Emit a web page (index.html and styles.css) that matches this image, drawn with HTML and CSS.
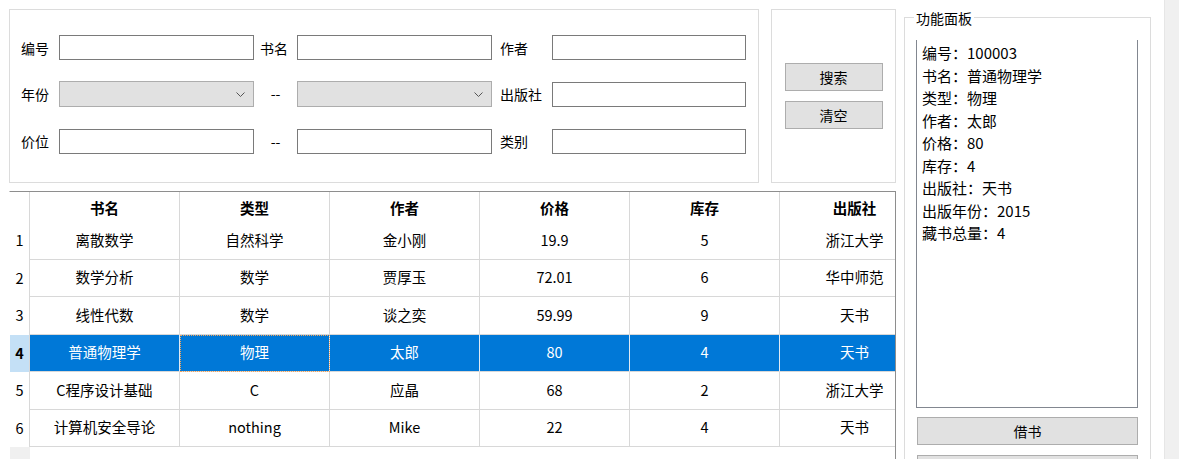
FILE: index.html
```html
<!DOCTYPE html>
<html lang="zh-CN">
<head>
<meta charset="utf-8">
<title>图书管理</title>
<link rel="stylesheet" href="styles.css">
</head>
<body>
<div class="window">
  <div class="main">
    <div class="top">
      <div class="search-box">
        <div class="form">
          <span class="lbl">编号</span>
          <input class="field" type="text">
          <span class="lbl l2">书名</span>
          <input class="field" type="text">
          <span class="lbl l3">作者</span>
          <input class="field" type="text">

          <span class="lbl">年份</span>
          <div class="combo"><svg class="chev" width="9" height="5" viewBox="0 0 9 5"><polyline points="0.5,0.5 4.5,4.5 8.5,0.5"/></svg></div>
          <span class="lbl dash">--</span>
          <div class="combo"><svg class="chev" width="9" height="5" viewBox="0 0 9 5"><polyline points="0.5,0.5 4.5,4.5 8.5,0.5"/></svg></div>
          <span class="lbl l3">出版社</span>
          <input class="field" type="text">

          <span class="lbl">价位</span>
          <input class="field" type="text">
          <span class="lbl dash">--</span>
          <input class="field" type="text">
          <span class="lbl l3">类别</span>
          <input class="field" type="text">
        </div>
      </div>
      <div class="btn-box">
        <button class="btn">搜索</button>
        <button class="btn">清空</button>
      </div>
    </div>

    <div class="table">
      <div class="grid">
        <div class="c h rh"></div>
        <div class="c h">书名</div>
        <div class="c h">类型</div>
        <div class="c h">作者</div>
        <div class="c h">价格</div>
        <div class="c h">库存</div>
        <div class="c h">出版社</div>

        <div class="c rh">1</div>
        <div class="c">离散数学</div>
        <div class="c">自然科学</div>
        <div class="c">金小刚</div>
        <div class="c">19.9</div>
        <div class="c">5</div>
        <div class="c">浙江大学</div>

        <div class="c rh">2</div>
        <div class="c">数学分析</div>
        <div class="c">数学</div>
        <div class="c">贾厚玉</div>
        <div class="c">72.01</div>
        <div class="c">6</div>
        <div class="c">华中师范</div>

        <div class="c rh">3</div>
        <div class="c">线性代数</div>
        <div class="c">数学</div>
        <div class="c">谈之奕</div>
        <div class="c">59.99</div>
        <div class="c">9</div>
        <div class="c">天书</div>

        <div class="c rh sel">4</div>
        <div class="c sel">普通物理学</div>
        <div class="c sel focus">物理</div>
        <div class="c sel">太郎</div>
        <div class="c sel">80</div>
        <div class="c sel">4</div>
        <div class="c sel">天书</div>

        <div class="c rh">5</div>
        <div class="c">C程序设计基础</div>
        <div class="c">C</div>
        <div class="c">应晶</div>
        <div class="c">68</div>
        <div class="c">2</div>
        <div class="c">浙江大学</div>

        <div class="c rh">6</div>
        <div class="c">计算机安全导论</div>
        <div class="c">nothing</div>
        <div class="c">Mike</div>
        <div class="c">22</div>
        <div class="c">4</div>
        <div class="c">天书</div>
      </div>
      <div class="filler"><div class="filler-rh"></div></div>
    </div>
  </div>

  <fieldset class="panel">
    <legend>功能面板</legend>
    <div class="info">
      <div>编号：100003</div>
      <div>书名：普通物理学</div>
      <div>类型：物理</div>
      <div>作者：太郎</div>
      <div>价格：80</div>
      <div>库存：4</div>
      <div>出版社：天书</div>
      <div>出版年份：2015</div>
      <div>藏书总量：4</div>
    </div>
    <button class="btn pbtn">借书</button>
    <button class="btn pbtn second" aria-label="更多"></button>
  </fieldset>

  <div class="scroll"></div>
</div>
</body>
</html>
```

FILE: styles.css
```css
* { box-sizing: border-box; }

body {
  margin: 0;
  font-family: "Noto Sans CJK SC", "Noto Sans", sans-serif;
  font-size: 14px;
  color: #000;
  background: #fff;
  overflow: hidden;
}

.window {
  display: flex;
  height: 459px;
  overflow: hidden;
}

.main {
  margin: 9px 0 0 9px;
  width: 887px;
  flex-shrink: 0;
  display: flex;
  flex-direction: column;
  gap: 8px;
}

.top {
  display: flex;
  gap: 12px;
  height: 174px;
  flex-shrink: 0;
}

.search-box {
  width: 750px;
  border: 1px solid #dcdcdc;
  padding: 25px 0 0 11px;
}

.form {
  display: grid;
  grid-template-columns: 38px 195px 43px 195px 60px 194px;
  grid-template-rows: 25px 26px 25px;
  row-gap: 21px;
  align-items: center;
}

.form > :nth-child(n+13) { margin-top: 1px; }

.lbl {
  line-height: 20px;
  white-space: nowrap;
}
.l2 { padding-left: 6px; }
.l3 { padding-left: 8px; }
.dash { text-align: center; margin-top: -2px; }

.field {
  display: block;
  width: 100%;
  height: 25px;
  margin: 0;
  border: 1px solid #7a7a7a;
  background: #fff;
  padding: 0 3px;
  font: inherit;
}

.combo {
  height: 26px;
  background: #e1e1e1;
  border: 1px solid #adadad;
  display: flex;
  align-items: center;
  justify-content: flex-end;
  padding-right: 8px;
}
.chev polyline {
  fill: none;
  stroke: #555;
  stroke-width: 1;
}

.btn-box {
  width: 125px;
  border: 1px solid #dcdcdc;
  display: flex;
  flex-direction: column;
  align-items: center;
  justify-content: center;
  gap: 10px;
}

.btn {
  width: 98px;
  height: 28px;
  margin: 0;
  padding: 0;
  background: #e1e1e1;
  border: 1px solid #adadad;
  font-family: inherit;
  font-size: 14px;
  line-height: 20px;
  color: #000;
}

.table {
  flex: 1;
  min-height: 0;
  border-top: 1px solid #8e8e8e;
  border-right: 1px solid #8e8e8e;
  border-left: 1px solid #fff;
  display: flex;
  flex-direction: column;
  overflow: hidden;
}

.grid {
  display: grid;
  grid-template-columns: 20px repeat(6, 150px);
  grid-template-rows: 30px repeat(6, 37.5px);
  flex-shrink: 0;
}

.c {
  display: flex;
  align-items: center;
  justify-content: center;
  white-space: nowrap;
  line-height: 20px;
  font-size: 14.5px;
  padding-bottom: 1px;
  border-right: 1px solid #d8d8d8;
  border-bottom: 1px solid #d8d8d8;
}

.h {
  font-weight: bold;
  border-bottom: none;
  padding-top: 1px;
  padding-bottom: 0;
}

.rh {
  border-bottom: none;
}

.sel {
  background: #0078d7;
  color: #fff;
  border-right-color: #dfe9f3;
}

.rh.sel {
  background: #c4e0f6;
  color: #000;
  font-weight: bold;
  border-right-color: #d8d8d8;
}

.focus {
  outline: 1px dotted #f3a35a;
  outline-offset: -1px;
}

.filler {
  flex: 1;
  display: flex;
}
.filler-rh {
  width: 20px;
  background: #f0f0f0;
}

.panel {
  margin: 8px 0 0 8px;
  width: 247px;
  height: 520px;
  flex-shrink: 0;
  min-width: 0;
  border: 1px solid #dcdcdc;
  padding: 14px 12px 0 11px;
}

.panel legend {
  padding: 2px 2px 0;
  margin-left: -2px;
  font-size: 14px;
  line-height: 16px;
}

.info {
  width: 222px;
  height: 368px;
  border: 1px solid #828790;
  border-top: none;
  padding: 2px 5px;
  font-size: 15px;
  line-height: 22.5px;
}

.pbtn {
  display: block;
  width: 221px;
  margin: 9px 0 0 1px;
}
.pbtn.second { margin-top: 10px; }

.scroll {
  margin-left: 13px;
  width: 15px;
  flex-shrink: 0;
  background: #f0f0f0;
  border-left: 1px solid #e6e6e6;
}
```
